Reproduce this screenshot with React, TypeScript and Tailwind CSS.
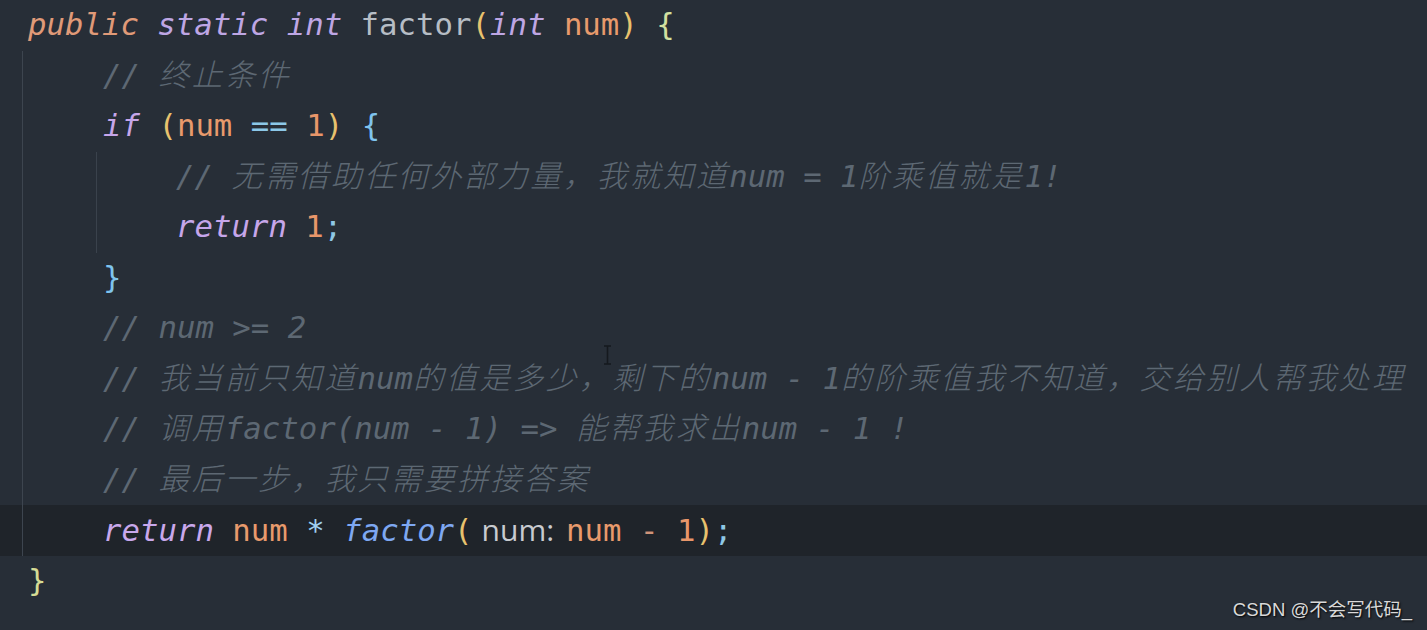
const CJK = /[\u3000-\u303f\u4e00-\u9fff\uff00-\uffef]+/g;

// comment text: CJK runs get extra tracking so they match the wider glyphs of the editor
const Comment = ({ text }: { text: string }) => {
  const parts: { t: string; cjk: boolean }[] = [];
  let last = 0;
  for (const m of text.matchAll(CJK)) {
    if (m.index! > last) parts.push({ t: text.slice(last, m.index), cjk: false });
    parts.push({ t: m[0], cjk: true });
    last = m.index! + m[0].length;
  }
  if (last < text.length) parts.push({ t: text.slice(last), cjk: false });
  return (
    <span className="italic text-[#5d6873]">
      {parts.map((p, i) =>
        p.cjk ? (
          <span key={i} className="font-light tracking-[2.5px]">
            {p.t}
          </span>
        ) : (
          <span key={i}>{p.t}</span>
        )
      )}
    </span>
  );
};

const Row = ({ children }: { children: React.ReactNode }) => (
  <div className="h-[50.5px] leading-[50.5px] whitespace-pre">{children}</div>
);

export default function App() {
  return (
    <div className="relative h-[630px] w-full overflow-hidden bg-[#272e37] font-['DejaVu_Sans_Mono','Noto_Sans_CJK_SC',monospace] text-[30.7px] text-[#b6bdc5]">
      {/* method signature */}
      <div className="pl-[28px]">
        <Row>
          <span className="italic text-[#e09a78]">public</span>{" "}
          <span className="italic text-[#bea6e4]">static</span>{" "}
          <span className="italic text-[#bea6e4]">int</span>{" "}
          <span className="text-[#b6bdc5]">factor</span>
          <span className="text-[#e8c26e]">(</span>
          <span className="italic text-[#bea6e4]">int</span>{" "}
          <span className="text-[#e89a6c]">num</span>
          <span className="text-[#e8c26e]">)</span>{" "}
          <span className="text-[#d3e0a0]">{"{"}</span>
        </Row>
      </div>

      {/* method body */}
      <div className="ml-[22px] border-l border-[#3d454f] pl-[80px]">
        <Row>
          <Comment text="// 终止条件" />
        </Row>
        <Row>
          <span className="italic text-[#c6a6ea]">if</span>{" "}
          <span className="text-[#e8c26e]">(</span>
          <span className="text-[#e89a6c]">num</span>{" "}
          <span className="text-[#8cc8e8]">==</span>{" "}
          <span className="text-[#e8966a]">1</span>
          <span className="text-[#e8c26e]">)</span>{" "}
          <span className="text-[#7fc4ee]">{"{"}</span>
        </Row>
        <div className="-ml-[7px] border-l border-[#3a424c] pl-[79px]">
          <Row>
            <Comment text="// 无需借助任何外部力量，我就知道num = 1阶乘值就是1!" />
          </Row>
          <Row>
            <span className="italic text-[#c6a6ea]">return</span>{" "}
            <span className="text-[#e8966a]">1</span>
            <span className="text-[#8fc8e6]">;</span>
          </Row>
        </div>
        <Row>
          <span className="text-[#7fc4ee]">{"}"}</span>
        </Row>
        <Row>
          <Comment text="// num >= 2" />
        </Row>
        <Row>
          <Comment text="// 我当前只知道num的值是多少，剩下的num - 1的阶乘值我不知道，交给别人帮我处理" />
        </Row>
        <Row>
          <Comment text="// 调用factor(num - 1) => 能帮我求出num - 1 !" />
        </Row>
        <Row>
          <Comment text="// 最后一步，我只需要拼接答案" />
        </Row>
      </div>

      {/* current line */}
      <div className="bg-[#1f242a] pl-[22px]">
        <div className="border-l border-[#3d454f] pl-[80px]">
          <Row>
            <span className="italic text-[#c9a8ec]">return</span>{" "}
            <span className="text-[#e89a6c]">num</span>{" "}
            <span className="text-[#9fd0ef]">*</span>{" "}
            <span className="italic text-[#7ea8f2]">factor</span>
            <span className="text-[#e8c26e]">(</span>
            <span className="ml-[9px] mr-[12px] inline-block font-['Open_Sans',sans-serif] text-[30px] text-[#c8cbd0]">
              num:
            </span>
            <span className="text-[#e89a6c]">num</span>{" "}
            <span className="text-[#cf9479]">-</span>{" "}
            <span className="text-[#e8966a]">1</span>
            <span className="text-[#e8c26e]">)</span>
            <span className="text-[#8fc8e6]">;</span>
          </Row>
        </div>
      </div>

      <div className="pl-[28px]">
        <Row>
          <span className="text-[#d6dc95]">{"}"}</span>
        </Row>
      </div>

      {/* mouse cursor */}
      <svg
        className="absolute left-[603px] top-[345px]"
        width="9"
        height="20"
        viewBox="0 0 9 20"
      >
        <path d="M1 1h7M4.5 1v18M1 19h7" stroke="#15191e" strokeWidth="1.6" fill="none" />
      </svg>

      {/* watermark */}
      <div className="absolute bottom-[9px] right-[15px] font-['Liberation_Sans','Noto_Sans_CJK_SC',sans-serif] text-[18.5px] leading-[22px] text-[#d9d9d9] [text-shadow:1px_1px_2px_#000]">
        CSDN @不会写代码_
      </div>
    </div>
  );
}
